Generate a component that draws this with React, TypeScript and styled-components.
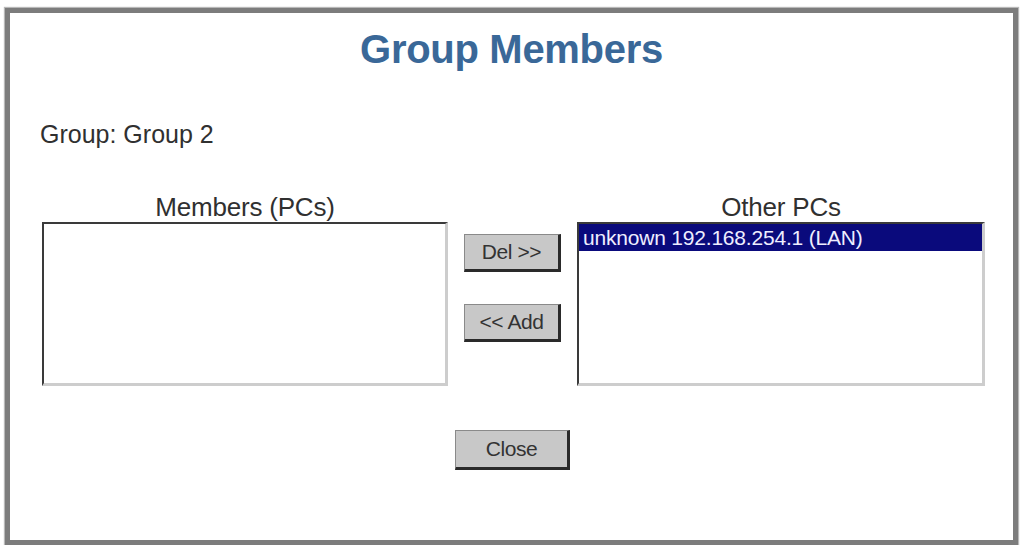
import styled, { createGlobalStyle } from "styled-components"

const GlobalStyle = createGlobalStyle`
  html, body {
    margin:0;
    padding:0;
    background:#ffffff;
  }
  body {
    font-family:"Liberation Sans", Arial, Helvetica, sans-serif;
    color:#303030;
  }
`

const otherPCs = [
  { name: 'unknown', ip: '192.168.254.1', iface: 'LAN', selected: true },
]

export default function App() {
  return <>
    <GlobalStyle/>
    <Frame>
      <Title>Group Members</Title>
      <GroupName>Group: Group 2</GroupName>
      <Columns>
        <ColumnLabel>Members (PCs)</ColumnLabel>
        <span/>
        <ColumnLabel>Other PCs</ColumnLabel>
        <ListBox/>
        <MoveButtons>
          <Button width={97} height={38}>Del &gt;&gt;</Button>
          <Button width={97} height={38}>&lt;&lt; Add</Button>
        </MoveButtons>
        <ListBox>
          {otherPCs.map(pc => (
            <ListItem key={pc.ip} selected={pc.selected}>
              {pc.name} {pc.ip} ({pc.iface})
            </ListItem>
          ))}
        </ListBox>
      </Columns>
      <Footer>
        <Button width={115} height={40}>Close</Button>
      </Footer>
    </Frame>
  </>
}

const Frame = styled.div`
  box-sizing:border-box;
  width:1013px;
  height:537px;
  margin:8px 0 0 5px;
  border:5px solid #7c7c7c;
  box-shadow:0 0 1px 1px #b8b8b8;
  display:flex;
  flex-direction:column;
`
const Title = styled.div`
  margin-top:13px;
  text-align:center;
  font-size:40px;
  line-height:46px;
  font-weight:bold;
  color:#3a6898;
  letter-spacing:-0.3px;
`
const GroupName = styled.div`
  margin:47px 0 0 30px;
  font-size:25px;
  line-height:30px;
`
const Columns = styled.div`
  display:grid;
  grid-template-columns:406px 129px 408px;
  grid-template-rows:30px 164px;
  margin:43px 0 0 32px;
`
const ColumnLabel = styled.div`
  text-align:center;
  font-size:26px;
  line-height:30px;
  letter-spacing:-0.2px;
`
const ListBox = styled.div`
  box-sizing:border-box;
  background:#ffffff;
  border-top:2px solid #3a3a3a;
  border-left:2px solid #3a3a3a;
  border-right:3px solid #cdcdcd;
  border-bottom:3px solid #cdcdcd;
  overflow:hidden;
`
const ListItem = styled.div<{ selected?: boolean }>`
  height:27px;
  line-height:27px;
  padding-left:4px;
  font-size:21px;
  letter-spacing:-0.2px;
  white-space:nowrap;
  background:${({ selected }) => selected ? '#0a0a7c' : 'transparent'};
  color:${({ selected }) => selected ? '#eeeeff' : '#303030'};
`
const MoveButtons = styled.div`
  display:flex;
  flex-direction:column;
  align-items:center;
  gap:32px;
  padding-top:12px;
`
const Button = styled.div<{ width: number, height: number }>`
  box-sizing:border-box;
  width:${({ width }) => width}px;
  height:${({ height }) => height}px;
  display:flex;
  align-items:center;
  justify-content:center;
  background:#c8c8c8;
  border-top:1px solid #8a8a8a;
  border-left:1px solid #8a8a8a;
  border-right:3px solid #2a2a2a;
  border-bottom:3px solid #2a2a2a;
  font-size:21px;
  letter-spacing:-0.4px;
  color:#333333;
  cursor:default;
`
const Footer = styled.div`
  display:flex;
  justify-content:center;
  margin-top:44px;
  padding-left:2px;
`
